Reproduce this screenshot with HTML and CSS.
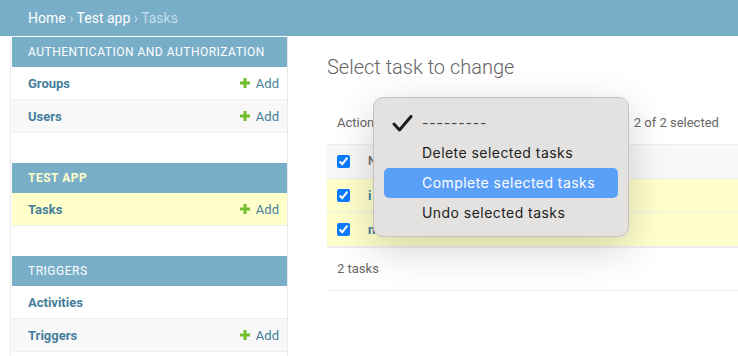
FILE: index.html
```html
<!DOCTYPE html>
<html lang="en">
<head>
  <meta charset="UTF-8" />
  <title>Select task to change | Django site admin</title>
  <link rel="stylesheet" href="styles.css">
</head>
<body>

  <!-- Breadcrumbs -->
  <div class="breadcrumbs">
    <a href="#">Home</a> › <a href="#">Test app</a> › Tasks
  </div>

  <div class="main">

    <!-- Sidebar -->
    <nav class="sidebar">
      <div class="module">
        <div class="caption">Authentication and Authorization</div>
        <div class="row">
          <a class="model" href="#">Groups</a>
          <a class="addlink" href="#"><svg width="10" height="10" viewBox="0 0 10 10"><path d="M3.5 0h3v3.5H10v3H6.5V10h-3V6.5H0v-3h3.5z" fill="#70bf2b"/></svg>Add</a>
        </div>
        <div class="row">
          <a class="model" href="#">Users</a>
          <a class="addlink" href="#"><svg width="10" height="10" viewBox="0 0 10 10"><path d="M3.5 0h3v3.5H10v3H6.5V10h-3V6.5H0v-3h3.5z" fill="#70bf2b"/></svg>Add</a>
        </div>
      </div>

      <div class="module current-app">
        <div class="caption">Test app</div>
        <div class="row current-model">
          <a class="model" href="#">Tasks</a>
          <a class="addlink" href="#"><svg width="10" height="10" viewBox="0 0 10 10"><path d="M3.5 0h3v3.5H10v3H6.5V10h-3V6.5H0v-3h3.5z" fill="#70bf2b"/></svg>Add</a>
        </div>
      </div>

      <div class="module">
        <div class="caption">Triggers</div>
        <div class="row">
          <a class="model" href="#">Activities</a>
        </div>
        <div class="row">
          <a class="model" href="#">Triggers</a>
          <a class="addlink" href="#"><svg width="10" height="10" viewBox="0 0 10 10"><path d="M3.5 0h3v3.5H10v3H6.5V10h-3V6.5H0v-3h3.5z" fill="#70bf2b"/></svg>Add</a>
        </div>
      </div>
    </nav>

    <!-- Content -->
    <div class="content">
      <h1>Select task to change</h1>

      <div class="changelist">
        <div class="actions">
          <span class="label">Action:</span>
          <span class="select"></span>
          <span class="go">Go</span>
          <span class="counter">2 of 2 selected</span>
        </div>

        <table>
          <thead>
            <tr>
              <th class="check"><input type="checkbox" checked></th>
              <th>Name</th>
            </tr>
          </thead>
          <tbody>
            <tr>
              <td class="check"><input type="checkbox" checked></td>
              <td><a href="#">i</a></td>
            </tr>
            <tr>
              <td class="check"><input type="checkbox" checked></td>
              <td><a href="#">n</a></td>
            </tr>
          </tbody>
        </table>

        <p class="paginator">2 tasks</p>

        <!-- Open action dropdown -->
        <div class="menu">
          <div class="menu-item">
            <svg class="tick" width="21" height="17" viewBox="0 0 21 17"><path d="M2 9L7.5 15L19 1.5" fill="none" stroke="#1c1c1c" stroke-width="3" stroke-linecap="round" stroke-linejoin="round"/></svg>
            <span class="dashes">---------</span>
          </div>
          <div class="menu-item">Delete selected tasks</div>
          <div class="menu-item active">Complete selected tasks</div>
          <div class="menu-item">Undo selected tasks</div>
        </div>
      </div>
    </div>

  </div>

</body>
</html>
```

FILE: styles.css
```css
* { box-sizing: border-box; }
body {
  margin: 0;
  font-family: Roboto, 'Liberation Sans', sans-serif;
  color: #333;
  background: #fff;
  overflow: hidden;
}

a {
  color: #447e9b;
  text-decoration: none;
}

.breadcrumbs {
  height: 36px;
  line-height: 36px;
  padding: 0 28px;
  background: #79aec8;
  color: #c4dce8;
  font-size: 14px;
}

.breadcrumbs a {
  color: #fff;
}

.main {
  display: flex;
  height: 320px;
}

/* Sidebar */
.sidebar {
  flex: 0 0 278px;
  margin-left: 10px;
  padding: 1px 0 0 1px;
  border-left: 1px solid #eaeaea;
  border-right: 1px solid #eaeaea;
}

.module {
  margin-bottom: 30px;
}

.caption {
  height: 30px;
  line-height: 30px;
  padding-left: 16px;
  background: #79aec8;
  color: #fff;
  font-size: 12px;
  letter-spacing: 0.5px;
  text-transform: uppercase;
}

.current-app .caption {
  color: #ffc;
  font-weight: bold;
}

.row {
  display: flex;
  justify-content: space-between;
  align-items: center;
  height: 33px;
  padding: 0 8px 0 16px;
  border-bottom: 1px solid #eee;
  font-size: 13px;
}

/* caption is child 1, so every second model row is odd */
.row:nth-child(odd) {
  background: #f8f8f8;
}

.row.current-model {
  background: #ffc;
}

.model {
  font-weight: bold;
}

.addlink {
  display: flex;
  align-items: center;
  gap: 6px;
}

/* Content */
.content {
  flex: 1;
  min-width: 0;
  padding: 19px 0 0 39px;
}

h1 {
  margin: 0 0 21px;
  font-size: 20px;
  line-height: 24px;
  font-weight: 300;
  color: #666;
}

.changelist {
  position: relative;
}

.actions {
  display: flex;
  align-items: center;
  height: 45px;
  padding: 0 10px;
  border-bottom: 1px solid #eee;
  font-size: 13px;
  color: #666;
}

.actions .select {
  width: 196px;
  height: 24px;
  margin-left: 6px;
  border: 1px solid #ccc;
  border-radius: 4px;
}

.actions .go {
  margin-left: 6px;
  padding: 0 10px;
  line-height: 24px;
  border: 1px solid #ccc;
  border-radius: 4px;
}

.actions .counter {
  margin-left: 10px;
}

table {
  width: 100%;
  border-collapse: collapse;
  font-size: 13px;
}

th, td {
  text-align: left;
  padding: 0 0 0 18px;
  border-bottom: 1px solid #eee;
}

th {
  height: 33px;
  background: #f8f8f8;
  color: #666;
  font-size: 12px;
  font-weight: 500;
  text-transform: uppercase;
}

td {
  height: 34px;
  background: #ffc;
}

td a {
  font-weight: bold;
}

th.check, td.check {
  width: 23px;
  padding: 0 0 0 10px;
}

input[type="checkbox"] {
  display: block;
  width: 13px;
  height: 13px;
  margin: 0;
  accent-color: #0a7aff;
}

.paginator {
  margin: 0;
  padding: 10px;
  line-height: 22px;
  font-size: 13px;
  color: #666;
  border-top: 1px solid #eee;
  border-bottom: 1px solid #eee;
}

/* Action dropdown */
.menu {
  position: absolute;
  left: 46px;
  top: -3px;
  width: 256px;
  padding: 10px 10px 8px;
  background: #e3e2e0;
  border: 1px solid #c3c2c0;
  border-radius: 10px;
  box-shadow: 0 12px 40px rgba(0,0,0,0.18);
  font-family: Inter, 'Noto Sans', sans-serif;
  font-size: 14px;
  letter-spacing: 0.45px;
  color: #222;
}

.menu-item {
  position: relative;
  height: 30px;
  line-height: 30px;
  padding-left: 38px;
  border-radius: 5px;
}

.menu-item.active {
  background: #5a9ff8;
  color: #fff;
}

.dashes {
  color: #444;
  letter-spacing: 0.8px;
}

.tick {
  position: absolute;
  left: 8px;
  top: 7px;
}
```
